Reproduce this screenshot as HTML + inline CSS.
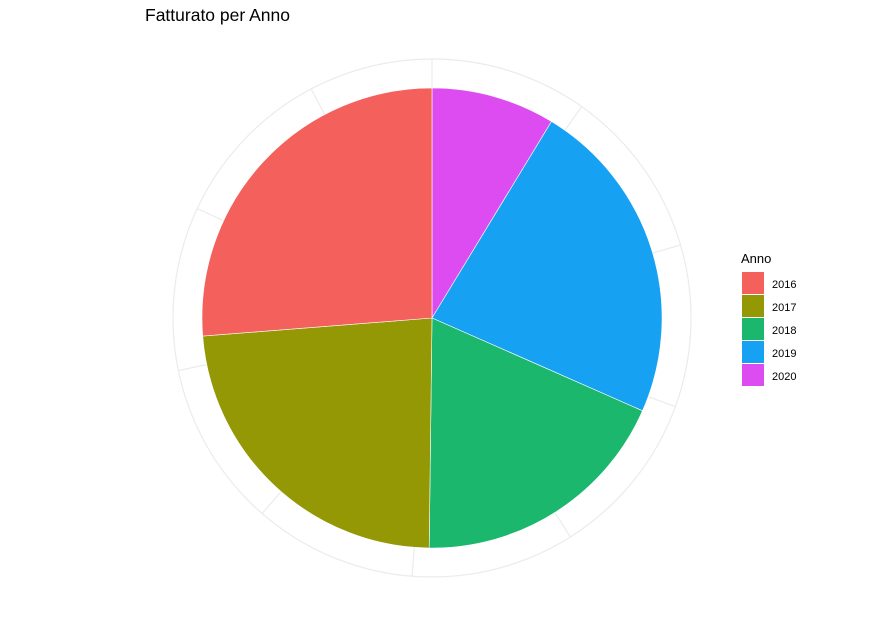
<!DOCTYPE html>
<html><head><meta charset="utf-8"><style>
html,body{margin:0;padding:0;background:#fff;}
svg{display:block;font-family:"Liberation Sans",sans-serif;}
</style></head><body>
<svg width="875" height="617" viewBox="0 0 875 617" xmlns="http://www.w3.org/2000/svg">
<rect width="875" height="617" fill="#fff"/>
<text x="145" y="21" font-size="17.5" fill="#000">Fatturato per Anno</text>
<g stroke="#ebebeb" stroke-width="1.2" fill="none">
<circle cx="432" cy="318" r="259"/>
<line x1="432" y1="318" x2="432" y2="59"/>
<line x1="432" y1="318" x2="581.7" y2="106.6"/>
<line x1="432" y1="318" x2="680.5" y2="244.9"/>
<line x1="432" y1="318" x2="675.4" y2="406.6"/>
<line x1="432" y1="318" x2="570.4" y2="536.9"/>
<line x1="432" y1="318" x2="412.1" y2="576.2"/>
<line x1="432" y1="318" x2="262.1" y2="513.5"/>
<line x1="432" y1="318" x2="178.4" y2="370.5"/>
<line x1="432" y1="318" x2="197.3" y2="208.5"/>
<line x1="432" y1="318" x2="311.2" y2="88.9"/>
</g>
<g stroke="#fff" stroke-width="0.6">
<path d="M432,318 L432,88 A230,230 0 0 1 551.5,121.5 Z" fill="#DD4CF0"/>
<path d="M432,318 L551.5,121.5 A230,230 0 0 1 642.5,410.8 Z" fill="#16A1F3"/>
<path d="M432,318 L642.5,410.8 A230,230 0 0 1 429.2,548 Z" fill="#1AB76C"/>
<path d="M432,318 L429.2,548 A230,230 0 0 1 202.7,336.1 Z" fill="#939804"/>
<path d="M432,318 L202.7,336.1 A230,230 0 0 1 432,88 Z" fill="#F4605B"/>
</g>
<text x="741" y="263" font-size="13" fill="#000">Anno</text>
<rect x="742" y="272" width="22" height="22" fill="#F4605B"/>
<rect x="742" y="295" width="22" height="22" fill="#939804"/>
<rect x="742" y="318" width="22" height="22" fill="#1AB76C"/>
<rect x="742" y="341" width="22" height="22" fill="#16A1F3"/>
<rect x="742" y="364" width="22" height="22" fill="#DD4CF0"/>
<g font-size="11" fill="#000">
<text x="772" y="288">2016</text>
<text x="772" y="311">2017</text>
<text x="772" y="334">2018</text>
<text x="772" y="357">2019</text>
<text x="772" y="380">2020</text>
</g>
</svg>
</body></html>
